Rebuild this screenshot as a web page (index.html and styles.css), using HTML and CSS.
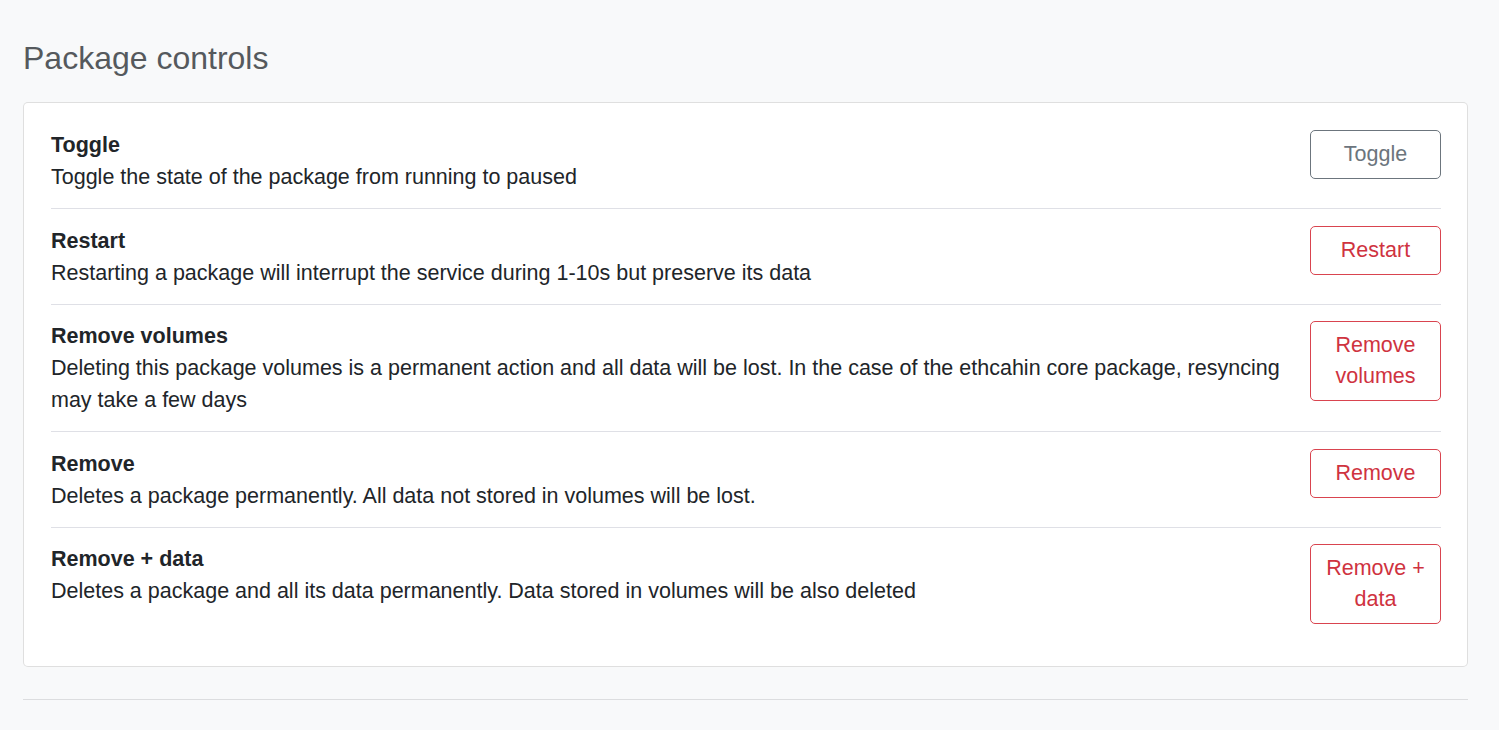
FILE: index.html
```
<!DOCTYPE html>
<html>
<head>
<meta charset="utf-8">
<link rel="stylesheet" href="styles.css">
</head>
<body>
<div class="page">
  <h1 class="title">Package controls</h1>
  <div class="card">
    <div class="row">
      <div class="info">
        <div class="name">Toggle</div>
        <div class="desc">Toggle the state of the package from running to paused</div>
      </div>
      <button class="btn btn-secondary">Toggle</button>
    </div>
    <div class="row">
      <div class="info">
        <div class="name">Restart</div>
        <div class="desc">Restarting a package will interrupt the service during 1-10s but preserve its data</div>
      </div>
      <button class="btn btn-danger">Restart</button>
    </div>
    <div class="row">
      <div class="info">
        <div class="name">Remove volumes</div>
        <div class="desc">Deleting this package volumes is a permanent action and all data will be lost. In the case of the ethcahin core package, resyncing may take a few days</div>
      </div>
      <button class="btn btn-danger">Remove volumes</button>
    </div>
    <div class="row">
      <div class="info">
        <div class="name">Remove</div>
        <div class="desc">Deletes a package permanently. All data not stored in volumes will be lost.</div>
      </div>
      <button class="btn btn-danger">Remove</button>
    </div>
    <div class="row">
      <div class="info">
        <div class="name">Remove + data</div>
        <div class="desc">Deletes a package and all its data permanently. Data stored in volumes will be also deleted</div>
      </div>
      <button class="btn btn-danger">Remove + data</button>
    </div>
  </div>
  <hr class="rule">
</div>
</body>
</html>
```
FILE: styles.css
```
html, body {
  margin: 0;
  padding: 0;
  background: #f8f9fa;
}
body {
  font-family: "Liberation Sans", Arial, sans-serif;
  font-size: 21.5px;
  line-height: 32px;
  color: #212529;
}
.page {
  padding: 38px 31px 0 23px;
}
.title {
  margin: 0 0 24px 0;
  font-size: 32px;
  line-height: 40px;
  font-weight: 400;
  color: #55595d;
}
.card {
  background: #fff;
  border: 1px solid rgba(0,0,0,0.125);
  border-radius: 5px;
  padding: 26px 26px 26px 27px;
}
.row {
  display: flex;
  align-items: flex-start;
  gap: 20px;
  padding: 15.5px 0 15px 0;
  border-bottom: 1px solid #dfe0e6;
}
.row:first-child {
  padding-top: 0;
}
.row:last-child {
  border-bottom: none;
  padding-bottom: 16px;
}
.info {
  flex: 1;
}
.name {
  font-weight: 700;
}
.btn {
  flex: 0 0 131px;
  width: 131px;
  margin-top: 1px;
  font-family: inherit;
  font-size: 21.5px;
  line-height: 31px;
  padding: 8px 12px;
  background: #fff;
  border-radius: 5px;
  border: 1px solid;
  text-align: center;
}
.btn-secondary {
  color: #6c757d;
  border-color: #6c757d;
}
.btn-danger {
  color: #cf333f;
  border-color: #d9444f;
}
.rule {
  margin: 32px 0 0 0;
  border: none;
  border-top: 1px solid #dcdddf;
}
```
